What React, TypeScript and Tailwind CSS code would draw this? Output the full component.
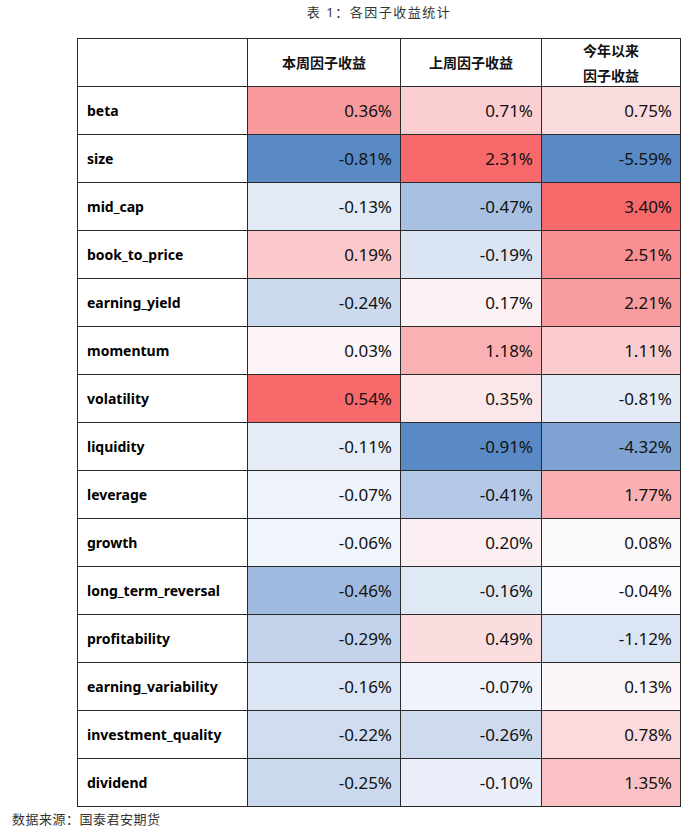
import { Fragment } from "react"

const rows = [
  { name: "beta", cells: [["0.36%", "bg-[#f99a9c]"], ["0.71%", "bg-[#fbcfd2]"], ["0.75%", "bg-[#fbdcde]"]] },
  { name: "size", cells: [["-0.81%", "bg-[#5a8ac6]"], ["2.31%", "bg-[#f8696b]"], ["-5.59%", "bg-[#5a8ac6]"]] },
  { name: "mid_cap", cells: [["-0.13%", "bg-[#e2eaf6]"], ["-0.47%", "bg-[#a8c1e2]"], ["3.40%", "bg-[#f8696b]"]] },
  { name: "book_to_price", cells: [["0.19%", "bg-[#fbc8cb]"], ["-0.19%", "bg-[#dae4f3]"], ["2.51%", "bg-[#f98f92]"]] },
  { name: "earning_yield", cells: [["-0.24%", "bg-[#ccdaee]"], ["0.17%", "bg-[#fcf1f4]"], ["2.21%", "bg-[#f99c9f]"]] },
  { name: "momentum", cells: [["0.03%", "bg-[#fcf4f7]"], ["1.18%", "bg-[#fab1b3]"], ["1.11%", "bg-[#fbcccf]"]] },
  { name: "volatility", cells: [["0.54%", "bg-[#f8696b]"], ["0.35%", "bg-[#fbe6e9]"], ["-0.81%", "bg-[#e4ebf7]"]] },
  { name: "liquidity", cells: [["-0.11%", "bg-[#e6ecf7]"], ["-0.91%", "bg-[#5a8ac6]"], ["-4.32%", "bg-[#7fa4d3]"]] },
  { name: "leverage", cells: [["-0.07%", "bg-[#eef2fa]"], ["-0.41%", "bg-[#b3c9e5]"], ["1.77%", "bg-[#fab0b2]"]] },
  { name: "growth", cells: [["-0.06%", "bg-[#f0f4fb]"], ["0.20%", "bg-[#fceff2]"], ["0.08%", "bg-[#fcf9fb]"]] },
  { name: "long_term_reversal", cells: [["-0.46%", "bg-[#a0bbdf]"], ["-0.16%", "bg-[#dfe8f5]"], ["-0.04%", "bg-[#fbfbff]"]] },
  { name: "profitability", cells: [["-0.29%", "bg-[#c2d3eb]"], ["0.49%", "bg-[#fbdde0]"], ["-1.12%", "bg-[#dce5f4]"]] },
  { name: "earning_variability", cells: [["-0.16%", "bg-[#dce5f4]"], ["-0.07%", "bg-[#eff3fb]"], ["0.13%", "bg-[#fcf6f9]"]] },
  { name: "investment_quality", cells: [["-0.22%", "bg-[#d0ddf0]"], ["-0.26%", "bg-[#cedbef]"], ["0.78%", "bg-[#fbdadd]"]] },
  { name: "dividend", cells: [["-0.25%", "bg-[#cad9ed]"], ["-0.10%", "bg-[#eaeff9]"], ["1.35%", "bg-[#fac2c4]"]] },
]

const cellBase = "h-[48px] border-r border-b border-[#2a2a2a] flex items-center"

export default function App() {
  return (
    <div className="w-[700px] h-[838px] bg-white font-['Noto_Sans','Noto_Sans_CJK_SC',sans-serif] text-[#111]">
      <div className="ml-[77px] w-[604px]">
        {/* Title */}
        <div className="h-[38px] pt-[3px] text-center text-[13px] leading-[18px] tracking-[1.5px] text-[#333]">
          表 1：各因子收益统计
        </div>

        {/* Table */}
        <div className="grid grid-cols-[170px_153px_141px_139px] border-t border-l border-[#2a2a2a]">
          <div className={cellBase} />
          <div className={`${cellBase} justify-center text-[14px] font-bold`}>本周因子收益</div>
          <div className={`${cellBase} justify-center text-[14px] font-bold`}>上周因子收益</div>
          <div className={`${cellBase} flex-col justify-center text-[14px] font-bold leading-[25px]`}>
            <span>今年以来</span>
            <span>因子收益</span>
          </div>

          {rows.map((row) => (
            <Fragment key={row.name}>
              <div className={`${cellBase} pl-[9px] text-[14px] font-bold text-black`}>{row.name}</div>
              {row.cells.map(([value, bg], i) => (
                <div key={i} className={`${cellBase} ${bg} justify-end pr-[8px] text-[17px]`}>
                  {value}
                </div>
              ))}
            </Fragment>
          ))}
        </div>
      </div>

      {/* Source */}
      <div className="mt-[3px] pl-[12px] text-[13px] leading-[18px] tracking-[0.5px] text-[#333]">
        数据来源：国泰君安期货
      </div>
    </div>
  )
}
